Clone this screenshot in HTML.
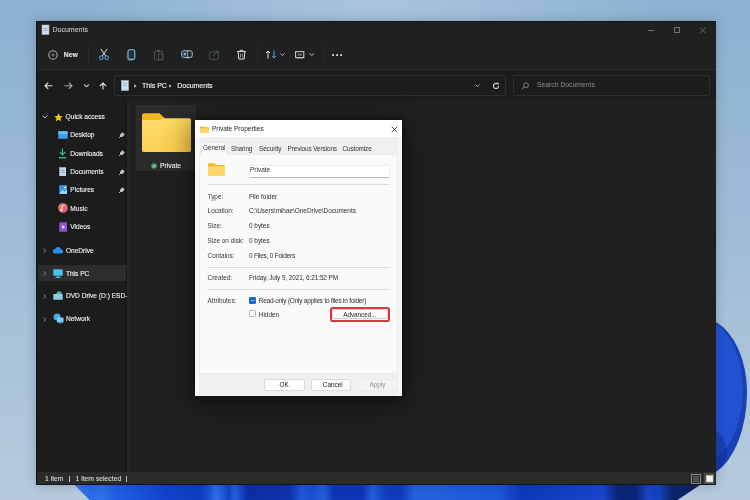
<!DOCTYPE html>
<html><head><meta charset="utf-8">
<style>
*{margin:0;padding:0;box-sizing:border-box}
html,body{width:750px;height:500px;overflow:hidden}
body{position:relative;font-family:"Liberation Sans",sans-serif;background:#9dbcd8}
.a{position:absolute;display:block}
.t{position:absolute;white-space:nowrap;line-height:1;-webkit-text-stroke:0.1px currentColor}
#root{position:absolute;left:0;top:0;width:750px;height:500px;overflow:hidden;filter:blur(0.35px)}
</style></head><body><div id="root">
<svg class="a" style="left:0;top:0" width="750" height="500" viewBox="0 0 750 500">
<defs>
<linearGradient id="sky" x1="0" y1="0" x2="0" y2="1">
<stop offset="0" stop-color="#8cb1d1"/><stop offset="0.5" stop-color="#a0bdd7"/><stop offset="1" stop-color="#b6cadc"/>
</linearGradient>
<radialGradient id="hl" cx="0.5" cy="0" r="0.4">
<stop offset="0" stop-color="#b2cbe0" stop-opacity="0.75"/><stop offset="1" stop-color="#b2cbe0" stop-opacity="0"/>
</radialGradient>
<linearGradient id="bl" x1="74" y1="0" x2="700" y2="0" gradientUnits="userSpaceOnUse"><stop offset="0.0000" stop-color="#3a7ce8"/><stop offset="0.0256" stop-color="#2a6ce6"/><stop offset="0.0447" stop-color="#2e72e8"/><stop offset="0.0655" stop-color="#1f5fe2"/><stop offset="0.1054" stop-color="#1a52da"/><stop offset="0.1454" stop-color="#1244cc"/><stop offset="0.2013" stop-color="#0e3cc0"/><stop offset="0.2141" stop-color="#1a4ed2"/><stop offset="0.2268" stop-color="#2c70e4"/><stop offset="0.2396" stop-color="#1e58d6"/><stop offset="0.2476" stop-color="#1242c4"/><stop offset="0.2556" stop-color="#2462dc"/><stop offset="0.2652" stop-color="#1a4ccc"/><stop offset="0.2780" stop-color="#0c2ea4"/><stop offset="0.3450" stop-color="#0d33ae"/><stop offset="0.3642" stop-color="#2058d8"/><stop offset="0.3818" stop-color="#1a4ed0"/><stop offset="0.3978" stop-color="#2460da"/><stop offset="0.4153" stop-color="#0e36b6"/><stop offset="0.4601" stop-color="#0e36b8"/><stop offset="0.4776" stop-color="#2460da"/><stop offset="0.4968" stop-color="#1040c0"/><stop offset="0.5208" stop-color="#0e3abc"/><stop offset="0.5431" stop-color="#2460da"/><stop offset="0.5847" stop-color="#2260dc"/><stop offset="0.6805" stop-color="#1c56d8"/><stop offset="0.7157" stop-color="#0e38b8"/><stop offset="0.8083" stop-color="#1642c6"/><stop offset="0.8450" stop-color="#1846cc"/><stop offset="0.8690" stop-color="#0c2478"/><stop offset="0.8978" stop-color="#0c2478"/><stop offset="0.9169" stop-color="#1845c6"/><stop offset="0.9361" stop-color="#1440bc"/><stop offset="0.9569" stop-color="#0c2468"/><stop offset="1.0000" stop-color="#0c2468"/></linearGradient>
<linearGradient id="br" x1="716" y1="0" x2="748" y2="0" gradientUnits="userSpaceOnUse">
<stop offset="0" stop-color="#2456d6"/><stop offset="1" stop-color="#1f4ccc"/>
</linearGradient>
<linearGradient id="brd" x1="0" y1="380" x2="0" y2="472" gradientUnits="userSpaceOnUse">
<stop offset="0" stop-color="#0f2a8a" stop-opacity="0"/><stop offset="1" stop-color="#0f2a8a" stop-opacity="0.9"/>
</linearGradient>
</defs>
<rect width="750" height="500" fill="url(#sky)"/>
<rect width="750" height="500" fill="url(#hl)"/>
<path d="M716 322 A47 74.5 0 0 1 747 392 A47 85 0 0 1 716 472 Z" fill="#1b40b4"/>
<path d="M716 324 A43 71 0 0 1 743 390 A43 75 0 0 1 716 458 Z" fill="#2152d2"/>
<path d="M716 430 C727 440 730 452 724 462 C721 466 719 469 716 471 Z" fill="#10309a" opacity="0.55"/>
<path d="M74.5 485 L700 485 L677.5 500 L89.5 500 Z" fill="url(#bl)"/>
</svg>
<div class="a" style="left:36.00px;top:21.30px;width:680.30px;height:463.30px;background:#141414;box-shadow:0 0 10px rgba(20,40,70,0.25);"></div>
<div class="a" style="left:37.00px;top:22.00px;width:679.00px;height:47.00px;background:#202020;"></div>
<div class="a" style="left:37.00px;top:70.00px;width:679.00px;height:30.00px;background:#1c1c1c;"></div>
<div class="a" style="left:37.00px;top:69.00px;width:679.00px;height:1.00px;background:#2c2c2c;"></div>
<div class="a" style="left:37.00px;top:100.00px;width:88.00px;height:372.00px;background:#1c1c1c;"></div>
<div class="a" style="left:125.00px;top:100.00px;width:2.00px;height:372.00px;background:#181818;"></div>
<div class="a" style="left:127.00px;top:100.00px;width:1.50px;height:372.00px;background:#262626;"></div>
<div class="a" style="left:128.50px;top:100.00px;width:587.50px;height:372.00px;background:#202020;"></div>
<div class="a" style="left:37.00px;top:472.00px;width:679.00px;height:12.00px;background:#2b2b2b;"></div>
<svg class="a" style="left:41px;top:24px" width="9" height="11" viewBox="0 0 9 11"><rect x="1" y="1" width="7" height="9.5" fill="#cfdcea"/><rect x="1" y="1" width="7" height="9.5" fill="none" stroke="#9fb3c8" stroke-width="0.6"/><rect x="2.5" y="4" width="4" height="0.8" fill="#7f97b0"/><rect x="2.5" y="6" width="4" height="0.8" fill="#7f97b0"/></svg>
<div class="t" style="left:52.50px;top:26.29px;font-size:7px;color:#c4c4c4;font-weight:400;">Documents</div>
<div class="a" style="left:648.00px;top:29.60px;width:6.00px;height:0.80px;background:#707070;"></div>
<div class="a" style="left:674.30px;top:26.80px;width:6.20px;height:6.20px;border:0.8px solid #707070;"></div>
<svg class="a" style="left:699px;top:26.5px" width="8" height="7" viewBox="0 0 8 7"><path d="M0.8 0.5L7 6.5M7 0.5L0.8 6.5" stroke="#707070" stroke-width="0.8"/></svg>
<svg class="a" style="left:48px;top:49.5px" width="10" height="10" viewBox="0 0 10 10"><circle cx="5" cy="5" r="4.2" fill="none" stroke="#a8a8a8" stroke-width="1.1"/><path d="M5 3.2v3.6M3.2 5h3.6" stroke="#8a8a8a" stroke-width="0.8"/></svg>
<div class="t" style="left:63.80px;top:52.20px;font-size:6.8px;color:#e8e8e8;font-weight:700;">New</div>
<div class="a" style="left:88.30px;top:46.00px;width:1.00px;height:18.00px;background:#282828;"></div>
<svg class="a" style="left:97px;top:48px" width="14" height="13" viewBox="0 0 14 13"><path d="M3.8 1L8.8 8M10.2 1L5.2 8" stroke="#c8c8c8" stroke-width="1.1"/><circle cx="4.3" cy="9.8" r="2" fill="#1d3a56" stroke="#5f9ccc" stroke-width="0.9"/><circle cx="9.7" cy="9.8" r="2" fill="#1d3a56" stroke="#5f9ccc" stroke-width="0.9"/></svg>
<svg class="a" style="left:126px;top:48.5px" width="11" height="12" viewBox="0 0 11 12"><rect x="2" y="0.8" width="6.8" height="9.6" rx="1.8" fill="#1c3444" stroke="#8cbcd8" stroke-width="1.1"/><path d="M1.3 3.5v6a1.8 1.8 0 0 0 1.8 1.8h3.5" fill="none" stroke="#5a8aa8" stroke-width="0.7"/></svg>
<svg class="a" style="left:153px;top:49px" width="12" height="12" viewBox="0 0 12 12"><rect x="1.5" y="2" width="8" height="9" rx="1.2" fill="none" stroke="#4a5552" stroke-width="1"/><rect x="4" y="1" width="3" height="2" fill="#4a5552"/><rect x="5.5" y="5" width="4.5" height="5.5" fill="none" stroke="#3f5a50" stroke-width="0.9"/></svg>
<svg class="a" style="left:180.5px;top:48.8px" width="12" height="10" viewBox="0 0 12 10"><rect x="0.8" y="1.8" width="10.4" height="6.6" rx="1.8" fill="#1a2a36" stroke="#b4c8d6" stroke-width="1"/><path d="M6.6 2.2v6" stroke="#b4c8d6" stroke-width="0.8"/><rect x="2.6" y="3.8" width="2.6" height="2.6" fill="#7fb0d0"/><path d="M5.6 9.2h2" stroke="#9ab" stroke-width="0.7"/></svg>
<svg class="a" style="left:208px;top:49px" width="13" height="12" viewBox="0 0 13 12"><rect x="1.5" y="3" width="9" height="7.5" rx="1.5" fill="none" stroke="#3e4a4c" stroke-width="1"/><path d="M5 7L10 2M7.5 2H10V4.5" stroke="#355a60" stroke-width="1" fill="none"/></svg>
<svg class="a" style="left:236px;top:49px" width="11" height="11" viewBox="0 0 11 11"><path d="M1 2.5h9M4 2.5V1.3h3V2.5" stroke="#e0e0e0" stroke-width="0.9" fill="none"/><path d="M2.2 2.8L2.8 10h5.4L8.8 2.8" stroke="#e0e0e0" stroke-width="1" fill="none"/><path d="M4.5 4.5v4M6.5 4.5v4" stroke="#c0c0c0" stroke-width="0.7"/></svg>
<div class="a" style="left:257.00px;top:46.00px;width:1.00px;height:18.00px;background:#282828;"></div>
<svg class="a" style="left:265px;top:49.5px" width="12" height="9" viewBox="0 0 12 9"><path d="M3 8.5V1M1 3L3 1L5 3" stroke="#e0e0e0" stroke-width="1" fill="none"/><path d="M9 0.5V8M7 6L9 8L11 6" stroke="#4fa3d8" stroke-width="1" fill="none"/></svg>
<svg class="a" style="left:280px;top:53px" width="5" height="3.5" viewBox="0 0 5 3.5"><path d="M0.5 0.5L2.5 2.5L4.5 0.5" stroke="#c8c8c8" stroke-width="0.9" fill="none"/></svg>
<svg class="a" style="left:295px;top:50.5px" width="9.5" height="8.5" viewBox="0 0 9.5 8.5"><rect x="0.6" y="0.6" width="8.2" height="6" fill="none" stroke="#d0d0d0" stroke-width="1"/><rect x="2.5" y="2.5" width="4.4" height="2.2" fill="#666"/><path d="M1.5 8h6.5" stroke="#bbb" stroke-width="0.8"/></svg>
<svg class="a" style="left:308.5px;top:53px" width="5.5" height="3.5" viewBox="0 0 5.5 3.5"><path d="M0.5 0.5L2.75 2.5L5 0.5" stroke="#c8c8c8" stroke-width="0.9" fill="none"/></svg>
<div class="a" style="left:323.50px;top:46.00px;width:1.00px;height:18.00px;background:#282828;"></div>
<svg class="a" style="left:331.8px;top:53.7px" width="2.4" height="2.4" viewBox="0 0 2.4 2.4"><circle cx="1.2" cy="1.2" r="1.1" fill="#dcdcdc"/></svg>
<svg class="a" style="left:335.8px;top:53.7px" width="2.4" height="2.4" viewBox="0 0 2.4 2.4"><circle cx="1.2" cy="1.2" r="1.1" fill="#dcdcdc"/></svg>
<svg class="a" style="left:339.8px;top:53.7px" width="2.4" height="2.4" viewBox="0 0 2.4 2.4"><circle cx="1.2" cy="1.2" r="1.1" fill="#dcdcdc"/></svg>
<svg class="a" style="left:44px;top:82px" width="9" height="7.5" viewBox="0 0 9 7.5"><path d="M8.5 3.75H1M4.2 0.6L1 3.75L4.2 6.9" stroke="#e8e8e8" stroke-width="1.1" fill="none"/></svg>
<svg class="a" style="left:64px;top:82px" width="9" height="7.5" viewBox="0 0 9 7.5"><path d="M0.5 3.75H8M4.8 0.6L8 3.75L4.8 6.9" stroke="#a8a8a8" stroke-width="1.1" fill="none"/></svg>
<svg class="a" style="left:82.8px;top:83.8px" width="7" height="3.5" viewBox="0 0 7 3.5"><path d="M1 0.6L3.5 2.9L6 0.6" stroke="#c8c8c8" stroke-width="1.2" fill="none"/></svg>
<svg class="a" style="left:98.5px;top:82px" width="8" height="7.5" viewBox="0 0 8 7.5"><path d="M4 7.5V1M0.8 4.2L4 1L7.2 4.2" stroke="#e8e8e8" stroke-width="1.1" fill="none"/></svg>
<div class="a" style="left:114.20px;top:75.20px;width:391.80px;height:20.60px;border:1px solid #2e2e2e;background:#1c1c1c;border-radius:1px;"></div>
<svg class="a" style="left:120.5px;top:79.5px" width="8" height="11" viewBox="0 0 8 11"><rect x="0.5" y="0.5" width="7" height="10" fill="#cde0f0"/><rect x="0.5" y="0.5" width="7" height="10" fill="none" stroke="#9ab8d2" stroke-width="0.6"/><rect x="2" y="3" width="4" height="0.7" fill="#86a6c4"/><rect x="2" y="5" width="4" height="0.7" fill="#86a6c4"/></svg>
<svg class="a" style="left:133.5px;top:83.5px" width="3" height="4" viewBox="0 0 3 4"><path d="M0.3 0.2L2.6 2L0.3 3.8Z" fill="#cfcfcf"/></svg>
<div class="t" style="left:142.00px;top:81.79px;font-size:7px;color:#f6f6f6;font-weight:400;">This PC</div>
<svg class="a" style="left:169px;top:83.5px" width="3" height="4" viewBox="0 0 3 4"><path d="M0.3 0.2L2.6 2L0.3 3.8Z" fill="#cfcfcf"/></svg>
<div class="t" style="left:177.20px;top:81.79px;font-size:7px;color:#f6f6f6;font-weight:400;">Documents</div>
<svg class="a" style="left:474.5px;top:84px" width="5" height="3" viewBox="0 0 5 3"><path d="M0.5 0.5L2.5 2.5L4.5 0.5" stroke="#c0c0c0" stroke-width="0.9" fill="none"/></svg>
<svg class="a" style="left:492px;top:81.5px" width="8" height="8" viewBox="0 0 8 8"><path d="M6.6 4A2.6 2.6 0 1 1 5.6 1.9" stroke="#d8d8d8" stroke-width="1.1" fill="none"/><path d="M4.6 0.6L6.8 1.1L6.3 3.4Z" fill="#d8d8d8"/></svg>
<div class="a" style="left:513.00px;top:75.20px;width:197.00px;height:20.60px;border:1px solid #2e2e2e;background:#1c1c1c;border-radius:1px;"></div>
<svg class="a" style="left:521px;top:81.5px" width="8" height="8" viewBox="0 0 8 8"><circle cx="5" cy="3.2" r="2.4" fill="none" stroke="#8a8a8a" stroke-width="0.9"/><path d="M3.3 4.9L0.8 7.4" stroke="#8a8a8a" stroke-width="1"/></svg>
<div class="t" style="left:537.00px;top:81.90px;font-size:6.8px;color:#8c8c8c;font-weight:400;-webkit-text-stroke:0;">Search Documents</div>
<svg class="a" style="left:41.6px;top:115px" width="6" height="3.5" viewBox="0 0 6 3.5"><path d="M0.5 0.5L3 3L5.5 0.5" stroke="#bdbdbd" stroke-width="1" fill="none"/></svg>
<svg class="a" style="left:54px;top:112.5px" width="9" height="8.5" viewBox="0 0 9 8.5"><path d="M4.5 0.3L5.8 3.1L8.8 3.3L6.5 5.3L7.3 8.3L4.5 6.7L1.7 8.3L2.5 5.3L0.2 3.3L3.2 3.1Z" fill="#f5c518"/></svg>
<div class="t" style="left:65.60px;top:113.90px;font-size:6.6px;color:#f4f4f4;font-weight:400;">Quick access</div>
<div class="t" style="left:70.30px;top:132.10px;font-size:6.6px;color:#f4f4f4;font-weight:400;">Desktop</div>
<svg class="a" style="left:118px;top:131.8px" width="7" height="6.5" viewBox="0 0 7 6.5"><path d="M1 6L3 4M2.5 2.5L4.5 0.8L6.2 2.5L4.5 4.5Z M2 3L4 5" stroke="#bfbfbf" stroke-width="1" fill="#bfbfbf"/></svg>
<div class="t" style="left:70.30px;top:150.50px;font-size:6.6px;color:#f4f4f4;font-weight:400;">Downloads</div>
<svg class="a" style="left:118px;top:150.2px" width="7" height="6.5" viewBox="0 0 7 6.5"><path d="M1 6L3 4M2.5 2.5L4.5 0.8L6.2 2.5L4.5 4.5Z M2 3L4 5" stroke="#bfbfbf" stroke-width="1" fill="#bfbfbf"/></svg>
<div class="t" style="left:70.30px;top:168.80px;font-size:6.6px;color:#f4f4f4;font-weight:400;">Documents</div>
<svg class="a" style="left:118px;top:168.5px" width="7" height="6.5" viewBox="0 0 7 6.5"><path d="M1 6L3 4M2.5 2.5L4.5 0.8L6.2 2.5L4.5 4.5Z M2 3L4 5" stroke="#bfbfbf" stroke-width="1" fill="#bfbfbf"/></svg>
<div class="t" style="left:70.30px;top:187.10px;font-size:6.6px;color:#f4f4f4;font-weight:400;">Pictures</div>
<svg class="a" style="left:118px;top:186.8px" width="7" height="6.5" viewBox="0 0 7 6.5"><path d="M1 6L3 4M2.5 2.5L4.5 0.8L6.2 2.5L4.5 4.5Z M2 3L4 5" stroke="#bfbfbf" stroke-width="1" fill="#bfbfbf"/></svg>
<div class="t" style="left:70.30px;top:205.50px;font-size:6.6px;color:#f4f4f4;font-weight:400;">Music</div>
<div class="t" style="left:70.30px;top:223.80px;font-size:6.6px;color:#f4f4f4;font-weight:400;">Videos</div>
<svg class="a" style="left:57.5px;top:130.5px" width="10" height="8" viewBox="0 0 10 8"><rect x="0.3" y="0.3" width="9.4" height="7.4" rx="0.6" fill="#3aa0e8"/><rect x="0.3" y="0.3" width="9.4" height="3" fill="#62bdf4"/></svg>
<svg class="a" style="left:58px;top:147.5px" width="9" height="11" viewBox="0 0 9 11"><path d="M4.5 0.5V6.5M1.8 4L4.5 6.8L7.2 4" stroke="#2fbf8a" stroke-width="1.2" fill="none"/><rect x="0.8" y="9" width="7.4" height="1.4" fill="#2fbf8a"/></svg>
<svg class="a" style="left:58.5px;top:166.8px" width="7.5" height="9.5" viewBox="0 0 7.5 9.5"><rect x="0.3" y="0.3" width="7" height="9" fill="#c5d6e8"/><rect x="0.3" y="0.3" width="7" height="9" fill="none" stroke="#8aa6c2" stroke-width="0.5"/><rect x="1.8" y="3" width="4" height="0.7" fill="#7a96b4"/><rect x="1.8" y="5" width="4" height="0.7" fill="#7a96b4"/></svg>
<svg class="a" style="left:58.5px;top:185px" width="8.5" height="9" viewBox="0 0 8.5 9"><rect x="0.2" y="0.2" width="8.1" height="8.6" fill="#3c9ae0"/><path d="M0.2 8.8L3.5 5L5.5 6.8L8.3 4.5V8.8Z" fill="#a8dcff"/><circle cx="6" cy="2.5" r="1" fill="#e8f6ff"/></svg>
<svg class="a" style="left:57.8px;top:203.3px" width="10" height="10" viewBox="0 0 10 10"><circle cx="5" cy="5" r="4.8" fill="#e06a7a"/><circle cx="5" cy="5" r="4.8" fill="url(#mg)"/><defs><linearGradient id="mg" x1="0" y1="0" x2="1" y2="1"><stop offset="0" stop-color="#f08a5a" stop-opacity="0.7"/><stop offset="1" stop-color="#c9457a" stop-opacity="0.3"/></linearGradient></defs><path d="M4 7.2V3L6.5 2.5" stroke="#fff" stroke-width="0.8" fill="none"/><circle cx="3.4" cy="7.2" r="1" fill="#fff"/></svg>
<svg class="a" style="left:58.5px;top:221.5px" width="8.5" height="10" viewBox="0 0 8.5 10"><rect x="0.2" y="0.2" width="8.1" height="9.6" rx="0.6" fill="#8b52d6"/><path d="M3 3L6.3 5L3 7Z" fill="#f0e6ff"/></svg>
<svg class="a" style="left:43px;top:247.8px" width="3.5" height="5" viewBox="0 0 3.5 5"><path d="M0.5 0.5L3 2.5L0.5 4.5" stroke="#8a8a8a" stroke-width="0.9" fill="none"/></svg>
<svg class="a" style="left:43px;top:270.5px" width="3.5" height="5" viewBox="0 0 3.5 5"><path d="M0.5 0.5L3 2.5L0.5 4.5" stroke="#8a8a8a" stroke-width="0.9" fill="none"/></svg>
<svg class="a" style="left:43px;top:293.5px" width="3.5" height="5" viewBox="0 0 3.5 5"><path d="M0.5 0.5L3 2.5L0.5 4.5" stroke="#8a8a8a" stroke-width="0.9" fill="none"/></svg>
<svg class="a" style="left:43px;top:316.5px" width="3.5" height="5" viewBox="0 0 3.5 5"><path d="M0.5 0.5L3 2.5L0.5 4.5" stroke="#8a8a8a" stroke-width="0.9" fill="none"/></svg>
<div class="a" style="left:37.50px;top:265.20px;width:88.70px;height:16.20px;background:#2d2d2d;"></div>
<svg class="a" style="left:43px;top:270.5px" width="3.5" height="5" viewBox="0 0 3.5 5"><path d="M0.5 0.5L3 2.5L0.5 4.5" stroke="#8a8a8a" stroke-width="0.9" fill="none"/></svg>
<div class="t" style="left:65.90px;top:247.50px;font-size:6.6px;color:#f4f4f4;font-weight:400;">OneDrive</div>
<div class="t" style="left:65.90px;top:270.50px;font-size:6.6px;color:#f4f4f4;font-weight:400;">This PC</div>
<div class="t" style="left:65.90px;top:293.30px;font-size:6.6px;color:#f4f4f4;font-weight:400;width:61px;overflow:hidden;">DVD Drive (D:) ESD-ISO</div>
<div class="t" style="left:65.90px;top:316.30px;font-size:6.6px;color:#f4f4f4;font-weight:400;">Network</div>
<svg class="a" style="left:52.3px;top:246px" width="11" height="8" viewBox="0 0 11 8"><path d="M2.5 7.5H9a2 2 0 0 0 0.3-4A3.2 3.2 0 0 0 3.2 3A2.3 2.3 0 0 0 2.5 7.5Z" fill="#2f8fe8"/></svg>
<svg class="a" style="left:53.3px;top:268.8px" width="10" height="9.5" viewBox="0 0 10 9.5"><rect x="0.3" y="0.3" width="9.4" height="6.5" rx="0.5" fill="#4cc2f0"/><rect x="3.8" y="6.8" width="2.4" height="1.5" fill="#3a9ed0"/><rect x="2.5" y="8.2" width="5" height="1" fill="#7ad0f4"/></svg>
<svg class="a" style="left:53.3px;top:291px" width="10" height="9" viewBox="0 0 10 9"><rect x="0.3" y="3" width="9.4" height="5.7" rx="0.6" fill="#8fcfdc"/><path d="M3 3L4.5 0.5H8L9 3" fill="#4fb4a4"/></svg>
<svg class="a" style="left:52.5px;top:312.8px" width="11" height="11" viewBox="0 0 11 11"><circle cx="4" cy="4" r="3.6" fill="#4aa8e0"/><rect x="4" y="4.5" width="6.5" height="5" rx="0.5" fill="#7fd0f0"/><rect x="6" y="9.5" width="2.5" height="1.2" fill="#3a90c8"/></svg>
<div class="a" style="left:136.40px;top:104.90px;width:60.00px;height:66.50px;background:#2b2b2b;"></div>
<svg class="a" style="left:142px;top:112.8px" width="49" height="39.2" viewBox="0 0 49 39.2"><defs><linearGradient id="fg" x1="0" y1="0" x2="1" y2="1"><stop offset="0" stop-color="#ffdf70"/><stop offset="1" stop-color="#f7c843"/></linearGradient></defs><path d="M2 0.3H17.5L23 5.5H47a2 2 0 0 1 2 2V37a2 2 0 0 1-2 2H2a2 2 0 0 1-2-2V2.3A2 2 0 0 1 2 0.3Z" fill="#f1b520"/><path d="M0 9a2 2 0 0 1 2-2H17L21.5 5.5H47a2 2 0 0 1 2 2V37a2 2 0 0 1-2 2H2a2 2 0 0 1-2-2Z" fill="url(#fg)"/></svg>
<svg class="a" style="left:151.3px;top:162.6px" width="6" height="6" viewBox="0 0 6 6"><circle cx="3" cy="3" r="2.8" fill="#3f9a66"/><path d="M1.6 3.1L2.7 4.1L4.5 2" stroke="#fff" stroke-width="0.8" fill="none"/></svg>
<div class="t" style="left:160.00px;top:162.90px;font-size:6.8px;color:#f4f4f4;font-weight:400;">Private</div>
<div class="t" style="left:45.00px;top:476.00px;font-size:6.8px;color:#dcdcdc;font-weight:400;">1 item</div>
<div class="a" style="left:69.20px;top:475.50px;width:0.80px;height:6.50px;background:#bdbdbd;"></div>
<div class="t" style="left:75.50px;top:476.00px;font-size:6.8px;color:#dcdcdc;font-weight:400;">1 item selected</div>
<div class="a" style="left:126.20px;top:475.50px;width:0.80px;height:6.50px;background:#bdbdbd;"></div>
<svg class="a" style="left:690.5px;top:473.5px" width="10" height="10" viewBox="0 0 10 10"><rect x="0.5" y="0.5" width="9" height="9" fill="none" stroke="#a0a0a0" stroke-width="0.8"/><path d="M2 2.8h6M2 5h6M2 7.2h6" stroke="#b0b0b0" stroke-width="0.6"/></svg>
<div class="a" style="left:703.50px;top:472.50px;width:10.50px;height:11.50px;background:#4a4a4a;"></div>
<svg class="a" style="left:704.5px;top:473.5px" width="9" height="9.5" viewBox="0 0 9 9.5"><rect x="1.2" y="1.5" width="6.8" height="6.5" fill="#f2f2f2" stroke="#bdbdbd" stroke-width="0.6"/></svg>
<div class="a" style="left:195px;top:120.3px;width:207.3px;height:275.4px;box-shadow:0 0 3px 1px rgba(0,0,0,0.4), 0 6px 24px 4px rgba(0,0,0,0.45);"></div>
<div class="a" style="left:195.00px;top:120.30px;width:207.30px;height:275.40px;background:#f6f6f6;"></div>
<div class="a" style="left:198.60px;top:137.00px;width:199.40px;height:17.00px;background:#efefef;"></div>
<div class="a" style="left:198.60px;top:374.00px;width:199.40px;height:20.60px;background:#efefef;"></div>
<div class="a" style="left:195.00px;top:120.30px;width:207.30px;height:16.70px;background:#ffffff;"></div>
<svg class="a" style="left:199.5px;top:125.5px" width="9" height="7" viewBox="0 0 9 7"><path d="M0 1a0.6 0.6 0 0 1 0.6-0.6H3.5L4.5 1.3H8.4a0.6 0.6 0 0 1 0.6 0.6V6.4a0.6 0.6 0 0 1-0.6 0.6H0.6A0.6 0.6 0 0 1 0 6.4Z" fill="#f0b72a"/><path d="M0 2.2H9V6.4a0.6 0.6 0 0 1-0.6 0.6H0.6A0.6 0.6 0 0 1 0 6.4Z" fill="#ffd767"/></svg>
<div class="t" style="left:212.00px;top:125.86px;font-size:6.5px;color:#1a1a1a;font-weight:400;-webkit-text-stroke:0;">Private Properties</div>
<svg class="a" style="left:390.5px;top:125.5px" width="7" height="7" viewBox="0 0 7 7"><path d="M0.7 0.7L6.3 6.3M6.3 0.7L0.7 6.3" stroke="#333" stroke-width="0.9"/></svg>
<div class="a" style="left:198.60px;top:154.00px;width:199.40px;height:220.00px;background:#fafafa;border:1px solid #ededed;"></div>
<div class="a" style="left:201.20px;top:142.00px;width:26.80px;height:13.00px;background:#fafafa;border:1px solid #e6e6e6;border-bottom:none;"></div>
<div class="t" style="left:203.00px;top:144.61px;font-size:6.4px;color:#333333;font-weight:400;-webkit-text-stroke:0;letter-spacing:-0.05px;">General</div>
<div class="t" style="left:231.00px;top:146.01px;font-size:6.4px;color:#333333;font-weight:400;-webkit-text-stroke:0;letter-spacing:-0.1px;">Sharing</div>
<div class="t" style="left:259.00px;top:146.01px;font-size:6.4px;color:#333333;font-weight:400;-webkit-text-stroke:0;letter-spacing:-0.1px;">Security</div>
<div class="t" style="left:287.50px;top:145.81px;font-size:6.4px;color:#333333;font-weight:400;-webkit-text-stroke:0;letter-spacing:-0.1px;">Previous Versions</div>
<div class="t" style="left:342.50px;top:145.81px;font-size:6.4px;color:#333333;font-weight:400;-webkit-text-stroke:0;letter-spacing:-0.12px;">Customize</div>
<svg class="a" style="left:208px;top:162.5px" width="17" height="13.5" viewBox="0 0 17 13.5"><path d="M0 1.3a1 1 0 0 1 1-1H6.5L8 2H16a1 1 0 0 1 1 1V12.5a1 1 0 0 1-1 1H1a1 1 0 0 1-1-1Z" fill="#f0b72a"/><path d="M0 3.2H17V12.5a1 1 0 0 1-1 1H1a1 1 0 0 1-1-1Z" fill="#ffd767"/></svg>
<div class="a" style="left:248.50px;top:164.50px;width:141.50px;height:13.00px;background:#ffffff;border:1px solid #ececec;border-bottom:1px solid #b8b8b8;border-radius:1px;"></div>
<div class="t" style="left:250.00px;top:167.25px;font-size:6.5px;color:#333333;font-weight:400;-webkit-text-stroke:0;">Private</div>
<div class="a" style="left:207.60px;top:184.00px;width:181.10px;height:1.00px;background:#dcdcdc;"></div>
<div class="t" style="left:207.60px;top:193.61px;font-size:6.4px;color:#383838;font-weight:400;-webkit-text-stroke:0;">Type:</div>
<div class="t" style="left:249.00px;top:193.61px;font-size:6.4px;color:#2c2c2c;font-weight:400;-webkit-text-stroke:0;">File folder</div>
<div class="t" style="left:207.60px;top:208.31px;font-size:6.4px;color:#383838;font-weight:400;-webkit-text-stroke:0;">Location:</div>
<div class="t" style="left:249.00px;top:208.31px;font-size:6.4px;color:#2c2c2c;font-weight:400;-webkit-text-stroke:0;">C:\Users\mihae\OneDrive\Documents</div>
<div class="t" style="left:207.60px;top:223.21px;font-size:6.4px;color:#383838;font-weight:400;-webkit-text-stroke:0;">Size:</div>
<div class="t" style="left:249.00px;top:223.21px;font-size:6.4px;color:#2c2c2c;font-weight:400;-webkit-text-stroke:0;">0 bytes</div>
<div class="t" style="left:207.60px;top:238.11px;font-size:6.4px;color:#383838;font-weight:400;-webkit-text-stroke:0;">Size on disk:</div>
<div class="t" style="left:249.00px;top:238.11px;font-size:6.4px;color:#2c2c2c;font-weight:400;-webkit-text-stroke:0;">0 bytes</div>
<div class="t" style="left:207.60px;top:252.91px;font-size:6.4px;color:#383838;font-weight:400;-webkit-text-stroke:0;">Contains:</div>
<div class="t" style="left:249.00px;top:252.91px;font-size:6.4px;color:#2c2c2c;font-weight:400;-webkit-text-stroke:0;letter-spacing:-0.17px;">0 Files, 0 Folders</div>
<div class="a" style="left:207.60px;top:266.80px;width:181.10px;height:1.00px;background:#dcdcdc;"></div>
<div class="t" style="left:207.60px;top:275.01px;font-size:6.4px;color:#383838;font-weight:400;-webkit-text-stroke:0;">Created:</div>
<div class="t" style="left:249.00px;top:275.21px;font-size:6.4px;color:#2c2c2c;font-weight:400;-webkit-text-stroke:0;letter-spacing:-0.08px;">Friday, July 9, 2021, 6:21:52 PM</div>
<div class="a" style="left:207.60px;top:289.20px;width:181.10px;height:1.00px;background:#dcdcdc;"></div>
<div class="t" style="left:207.60px;top:297.81px;font-size:6.4px;color:#383838;font-weight:400;-webkit-text-stroke:0;">Attributes:</div>
<div class="a" style="left:249.10px;top:297.00px;width:7.30px;height:7.30px;background:#1a66cc;border-radius:1.2px;"></div>
<div class="a" style="left:250.90px;top:300.30px;width:3.70px;height:0.80px;background:#79b4f4;"></div>
<div class="t" style="left:258.80px;top:297.81px;font-size:6.4px;color:#2c2c2c;font-weight:400;-webkit-text-stroke:0;letter-spacing:-0.18px;">Read-only (Only applies to files in folder)</div>
<div class="a" style="left:249.10px;top:310.30px;width:7.30px;height:7.20px;background:#fdfdfd;border:0.8px solid #b4b4b4;border-radius:1.2px;"></div>
<div class="t" style="left:258.80px;top:311.61px;font-size:6.4px;color:#2c2c2c;font-weight:400;-webkit-text-stroke:0;">Hidden</div>
<div class="a" style="left:331.50px;top:309.30px;width:56.50px;height:10.00px;background:#fdfdfd;border:1px solid #d0d0d0;"></div>
<div class="a" style="left:329.70px;top:307.20px;width:60.30px;height:14.40px;border:2.3px solid #dd3a3f;border-radius:2.5px;"></div>
<div class="t" style="left:343.20px;top:311.91px;font-size:6.4px;color:#1a1a1a;font-weight:400;-webkit-text-stroke:0;letter-spacing:-0.06px;">Advanced...</div>
<div class="a" style="left:263.80px;top:379.40px;width:41.20px;height:11.90px;background:#fdfdfd;border:1px solid #dadada;border-radius:2px;"></div>
<div class="t" style="left:279.60px;top:381.91px;font-size:6.4px;color:#1a1a1a;font-weight:400;-webkit-text-stroke:0;">OK</div>
<div class="a" style="left:310.80px;top:379.40px;width:40.70px;height:11.90px;background:#fdfdfd;border:1px solid #dadada;border-radius:2px;"></div>
<div class="t" style="left:322.80px;top:381.91px;font-size:6.4px;color:#1a1a1a;font-weight:400;-webkit-text-stroke:0;">Cancel</div>
<div class="a" style="left:357.50px;top:379.40px;width:40.50px;height:11.90px;background:#f3f3f3;border:1px solid #ececec;border-radius:2px;"></div>
<div class="t" style="left:369.50px;top:381.91px;font-size:6.4px;color:#a0a0a0;font-weight:400;">Apply</div>
</div></body></html>
